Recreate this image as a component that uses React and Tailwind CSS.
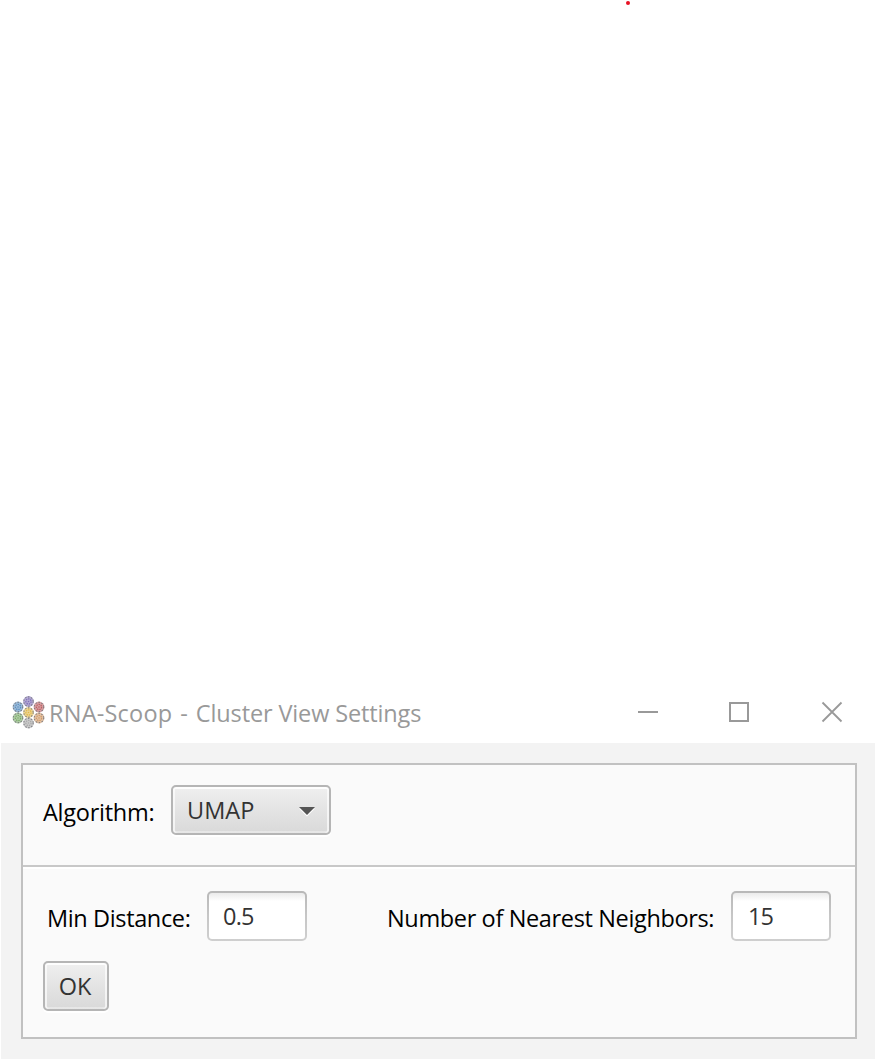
const DOTS = [
  { x: 16.5, y: 5.5, color: "#8272b8" },
  { x: 6, y: 11, color: "#5b8fc0" },
  { x: 27, y: 11, color: "#bd5f62" },
  { x: 16.5, y: 16.5, color: "#e0b84a" },
  { x: 6, y: 22, color: "#7bab6a" },
  { x: 27, y: 22, color: "#d09a68" },
  { x: 16.5, y: 27, color: "#a9a9a9" },
];

function AppLogo() {
  return (
    <svg width="33" height="33" viewBox="0 0 33 33" className="mb-px shrink-0">
      {DOTS.map(({ x, y, color }) => (
        <g key={color} fill="none" stroke={color}>
          <circle cx={x} cy={y} r="5.4" fill={color} fillOpacity="0.6" stroke="none" />
          <circle cx={x} cy={y} r="4.7" stroke="#6f6f76" strokeOpacity="0.75" strokeWidth="1.2" strokeDasharray="1.5 1.5" />
          <circle cx={x} cy={y} r="2.6" strokeWidth="1.3" strokeDasharray="1.4 0.9" />
          <circle cx={x} cy={y} r="0.8" fill={color} stroke="none" />
        </g>
      ))}
    </svg>
  );
}

function TitleBar() {
  return (
    <header className="flex h-[60px] items-center pl-3 pr-8">
      <AppLogo />
      <h1 className="ml-1 whitespace-nowrap text-[#999999]">
        <span className="tracking-[0.22px] [word-spacing:1.5px]">RNA-Scoop - </span>
        <span className="tracking-[-0.13px]">Cluster View Settings</span>
      </h1>
      <div className="ml-auto flex items-center text-[#999999]">
        <button aria-label="Minimize" className="mr-[71px] h-0.5 w-5 -translate-y-px bg-[#999999]" />
        <button aria-label="Maximize" className="mr-[72px] size-5 -translate-y-px border-2 border-[#999999]" />
        <button aria-label="Close" className="size-[22px] -translate-y-px">
          <svg width="22" height="22" viewBox="0 0 22 22" stroke="currentColor" strokeWidth="1.8">
            <path d="M1.5 1.5L20.5 20.5M20.5 1.5L1.5 20.5" />
          </svg>
        </button>
      </div>
    </header>
  );
}

function Label({ children, className }) {
  return <span className={`whitespace-nowrap pt-1 text-black ${className}`}>{children}</span>;
}

const RAISED =
  "h-[50px] rounded-[5px] border-2 border-[#b5b5b5] bg-linear-to-b from-[#efefef] to-[#d9d9d9] text-[#333333] shadow-[inset_0_2px_0_#fdfdfd,inset_2px_0_0_rgba(255,255,255,0.65),inset_-2px_0_0_rgba(255,255,255,0.65),inset_0_-2px_0_rgba(255,255,255,0.35),0_2px_0_#ffffff]";

function Select() {
  return (
    <button className={`flex w-40 items-center justify-between pl-[14px] pr-3.5 ${RAISED}`}>
      <span>UMAP</span>
      <svg width="16" height="13" viewBox="0 0 16 13">
        <path d="M0 4.5H16L8 12.6Z" fill="#ffffff" />
        <path d="M0 3H16L8 11Z" fill="#555555" />
      </svg>
    </button>
  );
}

function Field({ value, className }) {
  return (
    <div className="h-[50px] w-[100px] rounded-[5px] bg-linear-to-b from-[#b8b8b8] via-[#c6c6c6] to-[#cfcfcf] p-0.5">
      <div
        className={`flex h-full items-center rounded-[3px] bg-linear-to-b from-[#ebebeb] to-white to-[8px] text-[#333333] ${className}`}
      >
        {value}
      </div>
    </div>
  );
}

export default function App() {
  return (
    <div className="flex h-[1059px] w-[875px] flex-col overflow-hidden bg-white font-['Open_Sans','Noto_Sans',sans-serif] text-[23.5px] leading-8">
      <div className="flex h-[683px] items-start justify-end pr-[245px] pt-px">
        <span className="size-1 rounded-full bg-[#e81123]" />
      </div>
      <TitleBar />
      <main className="ml-px flex-1 bg-[#f3f3f3] pl-5 pr-[18px] pt-5">
        <section className="h-[276px] border-2 border-[#c1c1c1] bg-[#fafafa]">
          <div className="flex h-[102px] items-start border-b-2 border-[#c8c8c8] pl-5 pt-5">
            <div className="flex items-center">
              <Label className="w-32 tracking-[-0.25px]">Algorithm:</Label>
              <Select />
            </div>
          </div>
          <div className="flex h-[170px] flex-col items-start gap-5 border-t-2 border-white pl-5 pt-[22px]">
            <div className="flex items-center">
              <Label className="ml-1 w-40 tracking-[-0.37px]">Min Distance:</Label>
              <Field value="0.5" className="pl-3.5 tracking-[-0.8px]" />
              <Label className="ml-20 w-[344px] tracking-[-0.36px]">Number of Nearest Neighbors:</Label>
              <Field value="15" className="pl-[15px] tracking-[-1px]" />
            </div>
            <button className={`w-[66px] pr-0.5 ${RAISED}`}>OK</button>
          </div>
        </section>
      </main>
    </div>
  );
}
